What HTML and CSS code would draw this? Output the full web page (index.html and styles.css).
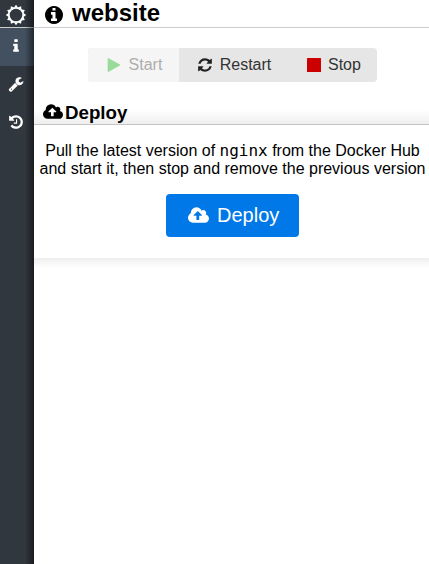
FILE: index.html
```html
<!DOCTYPE html>
<html lang="en">
<head>
<meta charset="utf-8">
<title>website</title>
<link rel="stylesheet" href="styles.css">
</head>
<body>
<svg class="defs" aria-hidden="true">
<symbol id="cloud" viewBox="0 128 1920 1408"><path d="M1280 864q0-14-9-23l-352-352q-9-9-23-9t-23 9l-351 351q-10 12-10 24 0 14 9 23t23 9h224v352q0 13 9.500 22.500t22.500 9.500h192q13 0 22.500-9.500t9.500-22.500v-352h224q13 0 22.500-9.500t9.500-22.500zm640 288q0 159-112.500 271.500t-271.500 112.500h-1088q-185 0-316.500-131.500t-131.500-316.500q0-130 70-240t188-165q-2-30-2-43 0-212 150-362t362-150q156 0 285.500 87t188.500 231q71-62 166-62 106 0 181 75t75 181q0 76-41 138 130 31 213.500 135.500t83.500 238.500z"/></symbol>
</svg>
<div class="app">
<nav class="sidebar">
<a class="logo"><svg width="22" height="22" viewBox="-11 -11 22 22"><circle r="7.2" fill="none" stroke="#fff" stroke-width="1.8"/><g id="t"><path id="a" d="M-2-7.400L0-10.200 2-7.400z"/><use href="#a" transform="rotate(30)"/><use href="#a" transform="rotate(60)"/></g><use href="#t" transform="rotate(90)"/><use href="#t" transform="rotate(180)"/><use href="#t" transform="rotate(270)"/></svg></a>
<a class="item active"><svg width="16" height="16" viewBox="0 0 1792 1792"><path d="M1216 1344v128q0 26-19 45t-45 19h-512q-26 0-45-19t-19-45v-128q0-26 19-45t45-19h64v-384h-64q-26 0-45-19t-19-45v-128q0-26 19-45t45-19h384q26 0 45 19t19 45v576h64q26 0 45 19t19 45zm-128-1152v192q0 26-19 45t-45 19h-256q-26 0-45-19t-19-45v-192q0-26 19-45t45-19h256q26 0 45 19t19 45z"/></svg></a>
<a class="item"><svg width="16" height="16" viewBox="0 0 1792 1792"><path d="M448 1472q0-26-19-45t-45-19-45 19-19 45 19 45 45 19 45-19 19-45zm644-420l-682 682q-37 37-90 37-52 0-91-37l-106-108q-38-36-38-90 0-53 38-91l681-681q39 98 114.500 173.500t173.500 114.500zm634-435q0 39-23 106-47 134-164.500 217.500t-258.500 83.500q-185 0-316.500-131.500t-131.500-316.500 131.500-316.500 316.500-131.500q58 0 121.500 16.500t107.500 46.500q16 11 16 28t-16 28l-293 169v224l193 107q5-3 79-48.500t135.500-81 70.500-35.500q15 0 23.500 10t8.500 25z"/></svg></a>
<a class="item"><svg width="16" height="16" viewBox="0 0 1792 1792"><path d="M1664 896q0 156-61 298t-164 245-245 164-298 61q-172 0-327-72.500t-264-204.500q-7-10-6.500-22.500t8.500-20.500l137-138q10-9 25-9 16 2 23 12 73 95 179 147t225 52q104 0 198.500-40.500t163.500-109.500 109.500-163.500 40.500-198.500-40.500-198.500-109.500-163.500-163.500-109.500-198.500-40.500q-98 0-188 35.500t-160 101.500l137 138q31 30 14 69-17 40-59 40h-448q-26 0-45-19t-19-45v-448q0-42 40-59 39-17 69 14l130 129q107-101 244.500-156.500t284.500-55.500q156 0 298 61t245 164 164 245 61 298zm-640-288v448q0 14-9 23t-23 9h-320q-14 0-23-9t-9-23v-64q0-14 9-23t23-9h224v-352q0-14 9-23t23-9h64q14 0 23 9t9 23z"/></svg></a>
</nav>
<main>
<h1><svg width="18" height="18" viewBox="128 128 1536 1536"><path d="M1152 1376v-160q0-14-9-23t-23-9h-96v-512q0-14-9-23t-23-9h-320q-14 0-23 9t-9 23v160q0 14 9 23t23 9h96v320h-96q-14 0-23 9t-9 23v160q0 14 9 23t23 9h448q14 0 23-9t9-23zm-128-896v-160q0-14-9-23t-23-9h-192q-14 0-23 9t-9 23v160q0 14 9 23t23 9h192q14 0 23-9t9-23zm640 416q0 209-103 385.500t-279.500 279.500-385.500 103-385.500-103-279.500-279.500-103-385.500 103-385.500 279.500-279.500 385.500-103 385.500 103 279.500 279.500 103 385.500z"/></svg><span>website</span></h1>
<div class="group">
<button class="start" disabled><svg width="14" height="16" viewBox="0 0 14 16"><path d="M.7.8L13 7.600q.4.400 0 .8L.7 15.200z"/></svg>Start</button>
<button class="restart"><svg width="16" height="16" viewBox="0 0 1792 1792"><path d="M1639 1056q0 5-1 7-64 268-268 434.500t-478 166.500q-146 0-282.500-55t-243.500-157l-129 129q-19 19-45 19t-45-19-19-45v-448q0-26 19-45t45-19h448q26 0 45 19t19 45-19 45l-137 137q71 66 161 102t187 36q134 0 250-65t186-179q11-17 53-117 8-23 30-23h192q13 0 22.500 9.500t9.500 22.500zm25-800v448q0 26-19 45t-45 19h-448q-26 0-45-19t-19-45 19-45l138-138q-148-137-349-137-134 0-250 65t-186 179q-11 17-53 117-8 23-30 23h-199q-13 0-22.500-9.500t-9.500-22.500v-7q65-268 270-434.500t480-166.500q146 0 284 55.500t245 156.500l130-129q19-19 45-19t45 19 19 45z"/></svg>Restart</button>
<button class="stop"><svg width="14" height="14" viewBox="0 0 14 14"><rect width="14" height="14" rx=".5"/></svg>Stop</button>
</div>
<h2><svg width="20" height="15"><use href="#cloud"/></svg><span>Deploy</span></h2>
<section>
<p>Pull the latest version of <code>nginx</code> from the Docker Hub<br>and start it, then stop and remove the previous version</p>
<button class="deploy"><svg width="21" height="16"><use href="#cloud"/></svg><span>Deploy</span></button>
</section>
<div class="shade"></div>
</main>
</div>
</body>
</html>
```

FILE: styles.css
```css
* { box-sizing: border-box; }
body { margin: 0; font: 16px/18px "Liberation Sans", Arial, sans-serif; color: #000; background: #fff; overflow: hidden; }
svg { display: block; flex: none; fill: currentColor; }
.defs { position: absolute; width: 0; height: 0; }
.app { display: flex; height: 564px; }
.sidebar { position: relative; width: 34px; flex: none; background: #30373f; color: #fff; }
.sidebar::after { content: ""; position: absolute; inset: 0 0 0 auto; width: 9px; background: linear-gradient(90deg, rgba(0,0,0,0), rgba(0,0,0,.5)); }
.logo { display: flex; height: 28px; padding: 4px 0 0 5px; border-bottom: 1px solid #ccc; }
.item { display: flex; height: 38px; padding: 10px 0 0 8px; }
.active { background: #42505f; }
main { flex: 1; min-width: 0; display: flex; flex-direction: column; }
h1 { display: flex; align-items: flex-start; height: 28px; margin: 0; padding: 0 0 0 11px; gap: 9px; border-bottom: 1px solid #ccc; font-size: 24px; line-height: 25px; }
h1 svg { margin-top: 6px; }
.group { display: flex; width: 289px; height: 34px; margin: 20px 0 0 54px; border-radius: 4px; overflow: hidden; background: #e6e6e6; }
button { border: 0; margin: 0; font: inherit; display: flex; align-items: center; }
.group button { background: none; color: #333; padding: 0; }
.group .start { width: 91px; padding-left: 18.600px; gap: 8px; background: #f5f5f5; color: #adadad; }
.start svg { color: #99dc99; }
.group .restart { width: 112px; padding-left: 17.700px; gap: 7px; }
.restart svg { color: #222; }
.group .stop { width: 86px; padding-left: 15.600px; gap: 7.400px; }
.stop svg { color: #c00; }
h2 { display: flex; align-items: center; height: 25px; margin: 18px 0 0; padding: 1px 0 0 9px; gap: 2px; border-bottom: 1px solid #c4c4c4; background: linear-gradient(#fff 10px, #eee); font-size: 18.720px; line-height: 22px; }
h2 svg { margin-top: -2px; }
section { height: 133px; padding-top: 17px; }
p { margin: 0 0 0 2px; text-align: center; white-space: nowrap; }
code { font: 16px/16px "DejaVu Sans Mono", monospace; }
.deploy { width: 133px; height: 43px; margin: 16px 0 0 132px; padding: 0 0 0 22px; gap: 8px; border-radius: 4px; background: #0078e7; color: #fff; font-size: 20px; }
.deploy svg { margin-top: -2px; }
.deploy span { margin-top: -2px; }
.shade { height: 10px; background: linear-gradient(#eee, #fff); }
```
